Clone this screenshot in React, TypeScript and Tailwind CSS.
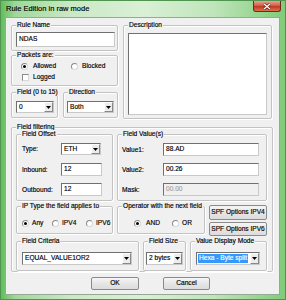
import React from "react";
import clsx from "clsx";

interface BoxProps {
  label: string;
  className?: string;
  children?: React.ReactNode;
}

// classic etched group box
const GroupBox = ({ label, className, children }: BoxProps) => (
  <fieldset
    className={clsx(
      "min-w-0 shrink-0 rounded-[2px] border border-[#c3c3c3] shadow-[inset_1px_1px_0_#fff,1px_1px_0_#fff]",
      className
    )}
  >
    <legend className="ml-[4px] whitespace-nowrap bg-[#f0f0f0] px-[1px] leading-[8px]">{label}</legend>
    {children}
  </fieldset>
);

const Edit = ({ value, className, disabled }: { value: string; className?: string; disabled?: boolean }) => (
  <div
    className={clsx(
      "flex h-[13px] shrink-0 items-center border border-[#c9c9c9] border-l-[#707070] border-t-[#707070] pl-[2px] leading-none",
      disabled ? "bg-[#f0f0f0] text-[#a3a3a3]" : "bg-white",
      className
    )}
  >
    {value}
  </div>
);

const Combo = ({ value, className, selected }: { value: string; className?: string; selected?: boolean }) => (
  <div
    className={clsx(
      "flex h-[12px] shrink-0 border border-[#c9c9c9] border-l-[#707070] border-t-[#707070] bg-white leading-none",
      className
    )}
  >
    <div className="flex flex-1 items-center pl-[1px]">
      <span className={clsx("px-[1px] py-[1px]", selected && "bg-[#3399ff] text-white")}>{value}</span>
    </div>
    <div className="flex w-[9px] items-center justify-center border border-[#888] border-l-white border-t-white bg-[#ececec]">
      <svg width="5" height="3" viewBox="0 0 5 3">
        <path d="M0 0h5L2.5 3z" fill="#000" />
      </svg>
    </div>
  </div>
);

const Radio = ({ checked }: { checked?: boolean }) => (
  <span className="flex h-[7px] w-[7px] shrink-0 items-center justify-center rounded-full border border-[#8a8a8a] border-b-[#d8d8d8] border-r-[#d8d8d8] bg-white">
    {checked && <span className="h-[3px] w-[3px] rounded-full bg-black" />}
  </span>
);

const Button = ({ label, className }: { label: string; className?: string }) => (
  <div
    className={clsx(
      "flex shrink-0 items-center justify-center rounded-[2px] border border-[#8a8a8a] bg-[linear-gradient(#f6f6f6,#e6e6e6_50%,#dcdcdc)] leading-none",
      className
    )}
  >
    {label}
  </div>
);

const App = (): JSX.Element => {
  return (
    <div className="flex h-[300px] w-[286px] flex-col overflow-hidden border border-[#4f944f] bg-[linear-gradient(90deg,#62bd5e_0%,#9fd89a_5%,#cbe9c6_25%,#d9f0d5_50%,#bfe5ba_75%,#7fcc79_100%)] text-left font-['Liberation_Sans',Arial,sans-serif] text-[6.6px] text-black [-webkit-text-stroke:0.15px]">
      {/* title bar */}
      <div className="flex h-[16px] w-full shrink-0 items-start">
        <span className="ml-[5px] mt-[3px] block w-fit text-[7.5px] leading-[10px]">Rule Edition in raw mode</span>
        <div className="ml-auto mr-[4px] flex h-[11px] w-[28px] items-center justify-center rounded-b-[3px] border border-t-0 border-[#6e2a1c] bg-[linear-gradient(#e8a393,#d4604a_45%,#c13b22_55%,#d9744f)]">
          <svg width="8" height="7" viewBox="0 0 8 7">
            <path d="M1 1l6 5M7 1L1 6" stroke="#5a1a10" strokeWidth="2.6" />
            <path d="M1 1l6 5M7 1L1 6" stroke="#fff" strokeWidth="1.4" />
          </svg>
        </div>
      </div>

      {/* client area */}
      <div className="ml-[4px] h-[278px] w-[275px] border border-[#95a995] bg-[#f0f0f0] pl-[5px] pt-[3px]">
        <div className="flex gap-[5px]">
          <div className="flex w-[107px] flex-col">
            <GroupBox label="Rule Name" className="h-[30px]">
              <Edit value="NDAS" className="ml-[4px] mt-[3px] h-[15px] w-[99px]" />
            </GroupBox>
            <GroupBox label="Packets are:" className="h-[35px]">
              <div className="mt-[3px] flex h-[8px] items-center pl-[9px]">
                <div className="flex w-[50px] items-center gap-[5px]">
                  <Radio checked />
                  <span>Allowed</span>
                </div>
                <div className="flex items-center gap-[4px]">
                  <Radio />
                  <span>Blocked</span>
                </div>
              </div>
              <div className="mt-[3px] flex h-[8px] items-center gap-[4px] pl-[10px]">
                <span className="h-[7px] w-[7px] border border-[#8a8a8a] border-b-[#d8d8d8] border-r-[#d8d8d8] bg-white" />
                <span>Logged</span>
              </div>
            </GroupBox>
            <div className="mt-[2px] flex gap-[5px]">
              <GroupBox label="Field (0 to 15)" className="h-[30px] w-[47px]">
                <Combo value="0" className="ml-[4px] mt-[5px] h-[11px] w-[38px]" />
              </GroupBox>
              <GroupBox label="Direction" className="h-[30px] w-[55px]">
                <Combo value="Both" className="ml-[3px] mt-[5px] h-[11px] w-[47px]" />
              </GroupBox>
            </div>
          </div>
          <GroupBox label="Description" className="h-[98px] w-[149px]">
            <div className="ml-[4px] mt-[4px] h-[82px] w-[139px] border border-[#c9c9c9] border-l-[#707070] border-t-[#707070] bg-white" />
          </GroupBox>
        </div>

        <GroupBox label="Field filtering" className="mt-[4px] h-[149px] w-[262px]">
          <div className="-mt-[1px] flex flex-col gap-[1px] pl-[4px]">
            <div className="flex gap-[4px]">
              <GroupBox label="Field Offset" className="h-[71px] w-[97px]">
                <div className="pl-[5px]">
                  <div className="mt-[5px] flex items-center">
                    <span className="w-[39px]">Type:</span>
                    <Combo value="ETH" className="h-[11px] w-[40px]" />
                  </div>
                  <div className="mt-[8px] flex items-center">
                    <span className="w-[39px]">Inbound:</span>
                    <Edit value="12" className="w-[41px]" />
                  </div>
                  <div className="mt-[7px] flex items-center">
                    <span className="w-[39px]">Outbound:</span>
                    <Edit value="12" className="w-[41px]" />
                  </div>
                </div>
              </GroupBox>
              <GroupBox label="Field Value(s)" className="h-[71px] w-[150px]">
                <div className="pl-[4px]">
                  <div className="mt-[5px] flex items-center">
                    <span className="w-[41px]">Value1:</span>
                    <Edit value="88.AD" className="w-[96px]" />
                  </div>
                  <div className="mt-[7px] flex items-center">
                    <span className="w-[41px]">Value2:</span>
                    <Edit value="00.26" className="w-[96px]" />
                  </div>
                  <div className="mt-[7px] flex items-center">
                    <span className="w-[41px]">Mask:</span>
                    <Edit value="00.00" disabled className="w-[96px]" />
                  </div>
                </div>
              </GroupBox>
            </div>

            <div className="flex gap-[4px]">
              <GroupBox label="IP Type the field applies to" className="h-[32px] w-[97px]">
                <div className="mt-[9px] flex h-[8px] items-center pl-[5px]">
                  <div className="flex w-[30px] items-center gap-[3px]">
                    <Radio checked />
                    <span>Any</span>
                  </div>
                  <div className="flex w-[34px] items-center gap-[3px]">
                    <Radio />
                    <span>IPV4</span>
                  </div>
                  <div className="flex items-center gap-[3px]">
                    <Radio />
                    <span>IPV6</span>
                  </div>
                </div>
              </GroupBox>
              <GroupBox label="Operator with the next field" className="h-[32px] w-[88px]">
                <div className="mt-[9px] flex h-[8px] items-center pl-[16px]">
                  <div className="flex w-[38px] items-center gap-[5px]">
                    <Radio checked />
                    <span>AND</span>
                  </div>
                  <div className="flex items-center gap-[3px]">
                    <Radio />
                    <span>OR</span>
                  </div>
                </div>
              </GroupBox>
              <div className="flex w-[58px] flex-col gap-[2px] pt-[3px]">
                <Button label="SPF Options IPV4" className="h-[15px]" />
                <Button label="SPF Options IPV6" className="h-[14px]" />
              </div>
            </div>

            <div className="flex gap-[4px]">
              <GroupBox label="Field Criteria" className="h-[34px] w-[123px]">
                <Combo value="EQUAL_VALUE1OR2" className="ml-[5px] mt-[7px] h-[13px] w-[110px]" />
              </GroupBox>
              <GroupBox label="Field Size" className="h-[34px] w-[43px]">
                <Combo value="2 bytes" className="ml-[2px] mt-[7px] h-[13px] w-[37px]" />
              </GroupBox>
              <GroupBox label="Value Display Mode" className="h-[34px] w-[77px]">
                <Combo value="Hexa - Byte split" selected className="ml-[5px] mt-[7px] h-[13px] w-[64px]" />
              </GroupBox>
            </div>
          </div>
        </GroupBox>

        <div className="mt-[5px] flex gap-[24px] pl-[80px]">
          <Button label="OK" className="h-[13px] w-[48px]" />
          <Button label="Cancel" className="h-[13px] w-[47px]" />
        </div>
      </div>
    </div>
  );
};

export default App;
